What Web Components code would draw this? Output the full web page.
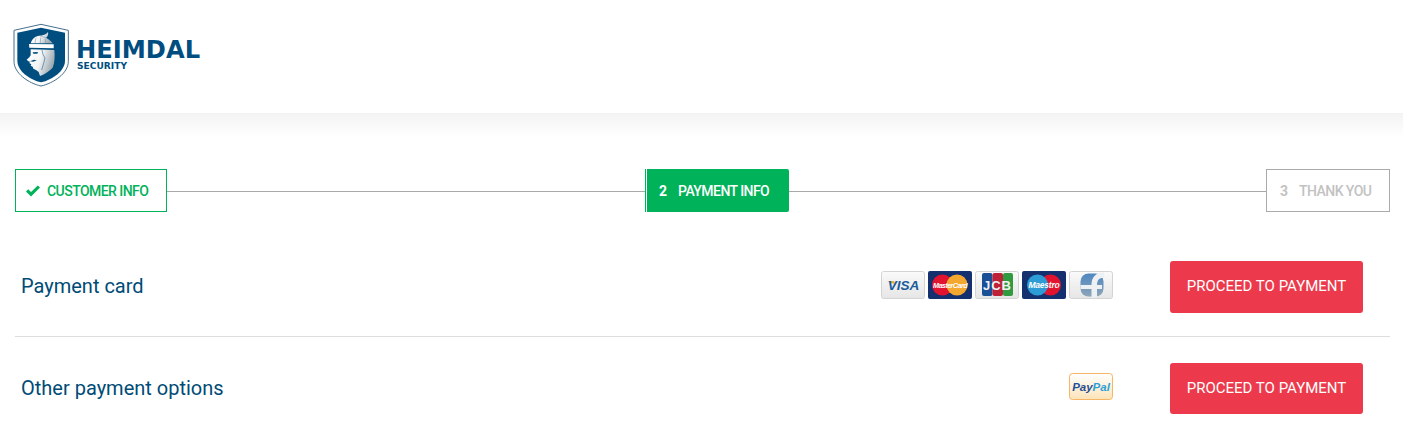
<!DOCTYPE html>
<html lang="en">
<head>
<meta charset="utf-8">
<title>Heimdal Security - Payment info</title>
<style>
  html, body { margin: 0; background: #fff; font-family: Roboto, sans-serif; }
</style>
</head>
<body>
<heimdal-header></heimdal-header>
<checkout-stepper>
  <step-box state="done" style="width:152px">CUSTOMER INFO</step-box>
  <step-line style="flex:478"></step-line>
  <step-box state="active" num="2" style="width:144px">PAYMENT INFO</step-box>
  <step-line style="flex:477"></step-line>
  <step-box num="3" style="width:124px">THANK YOU</step-box>
</checkout-stepper>
<pay-row divider style="--top:23px;--bottom:23px">
  Payment card
  <pay-card slot="cards" type="visa"></pay-card>
  <pay-card slot="cards" type="mastercard"></pay-card>
  <pay-card slot="cards" type="jcb"></pay-card>
  <pay-card slot="cards" type="maestro"></pay-card>
  <pay-card slot="cards" type="fcard"></pay-card>
</pay-row>
<pay-row style="--top:26px;--bottom:16px;--btn:51px">
  Other payment options
  <pay-card slot="cards" type="paypal"></pay-card>
</pay-row>

<script>
(function () {
  class HeimdalHeader extends HTMLElement {
    constructor() {
      super();
      const shadowRoot = this.attachShadow({ mode: "open" });
      shadowRoot.innerHTML = `
        <style>
          :host {
            display: block;
            height: 137px;
            background: linear-gradient(#fff 113px, #f3f3f3 113px, #fff 137px);
          }
          .logo {
            display: flex;
            padding: 20px 0 0 10px;
            color: #004e80;
            font-family: "DejaVu Sans", sans-serif;
            font-weight: bold;
          }
          svg {
            display: block;
            width: 65px;
            height: 70px;
          }
          .name {
            margin: 19px 0 0 1px;
            font-size: 24.2px;
            line-height: 22px;
          }
          .sub {
            margin: 0 0 0 2px;
            font-size: 9.1px;
            line-height: 10px;
          }
        </style>
        <div class="logo">
          <svg viewBox="0 0 195 210" aria-hidden="true">
            <defs>
              <linearGradient id="steel" x1="0" y1="0" x2="1" y2="0.3">
                <stop offset="0" stop-color="#fff"/>
                <stop offset="0.55" stop-color="#f2f4f5"/>
                <stop offset="1" stop-color="#9fabb3"/>
              </linearGradient>
            </defs>
            <path d="M93 13 L175 31 V124 C175 160 130 190 93 198 C56 190 12 160 12 124 V31 Z" fill="#fff" stroke="#47708d" stroke-width="3"/>
            <path d="M93 23 L165 38 V122 C165 153 127 179 93 187 C59 179 22 153 22 122 V38 Z" fill="#004e80"/>
            <!-- wing and helmet dome -->
            <path d="M62 70 C66 56 76 48 88 47 C98 47 108 44 114 36 C116 44 113 50 108 54 C115 56 122 62 128 70 Z" fill="url(#steel)"/>
            <path d="M88 47 C96 50 104 52 108 54 M78 53 L75 69 M92 52 L91 69 M106 57 L107 69" stroke="#6f8a9d" stroke-width="1.5" fill="none"/>
            <!-- band -->
            <path d="M57 72 L131 73 L131 85 L58 83 Z" fill="#fff"/>
            <!-- face, beard and hair -->
            <path d="M62 88 L133 90 C135 110 134 128 128 143 C118 153 105 162 90 168 L86 156 L78 150 L70 146 L68 140 L62 137 L64 133 L58 129 L60 125 L55 124 L50 119 L58 112 L62 106 Z" fill="url(#steel)"/>
            <path d="M68 97 L84 96 L82 101 L70 101 Z M60 124 L72 119 L80 121 L70 125 Z" fill="#004e80"/>
            <path d="M96 90 L99 104 L105 114 L101 130 L95 150" stroke="#004e80" stroke-width="1.5" fill="none"/>
          </svg>
          <div>
            <div class="name">HEIMDAL</div>
            <div class="sub">SECURITY</div>
          </div>
        </div>
      `;
    }
  }

  class CheckoutStepper extends HTMLElement {
    constructor() {
      super();
      const shadowRoot = this.attachShadow({ mode: "open" });
      shadowRoot.innerHTML = `
        <style>
          :host {
            display: flex;
            height: 43px;
            margin: 32px 13px 0 15px;
          }
        </style>
        <slot></slot>
      `;
    }
  }

  class StepLine extends HTMLElement {
    constructor() {
      super();
      const shadowRoot = this.attachShadow({ mode: "open" });
      shadowRoot.innerHTML = `
        <style>
          :host {
            display: block;
            height: 1px;
            margin-top: 22px;
            background: #a9a9a9;
          }
        </style>
      `;
    }
  }

  class StepBox extends HTMLElement {
    constructor() {
      super();
      const state = this.getAttribute("state") || "todo";
      const num = this.getAttribute("num");
      const lead =
        state === "done"
          ? `<svg class="check" viewBox="0 0 16 12" aria-hidden="true"><path d="M1 6.5 L3.2 4.3 L6 7 L12.8 .4 L15 2.6 L6 11.6 Z" fill="currentColor"/></svg>`
          : `<span class="num">${num}</span>`;
      const shadowRoot = this.attachShadow({ mode: "open" });
      shadowRoot.innerHTML = `
        <style>
          :host {
            display: block;
            flex: none;
            box-sizing: border-box;
            height: 43px;
          }
          .box {
            display: flex;
            align-items: center;
            box-sizing: border-box;
            height: 100%;
            font-size: 14px;
            font-weight: 500;
            letter-spacing: -0.55px;
            white-space: nowrap;
          }
          .done {
            border: 1px solid #00b259;
            color: #00b259;
            padding-left: 9px;
          }
          .active {
            border-left: 1px solid #00b259;
            background: linear-gradient(#00b259, #00b259) 1px 0 / 100% 100% no-repeat;
            color: #fff;
            border-radius: 0 2px 2px 0;
            padding-left: 13px;
          }
          .todo {
            border: 1px solid #aaa;
            color: #c2c2c2;
            padding-left: 13px;
          }
          .check {
            width: 16px;
            height: 12px;
            margin-right: 6px;
          }
          .num {
            font-weight: 700;
            letter-spacing: 0;
            margin-right: 11px;
          }
        </style>
        <div class="box ${state}">${lead}<slot></slot></div>
      `;
    }
  }

  class PayRow extends HTMLElement {
    constructor() {
      super();
      const shadowRoot = this.attachShadow({ mode: "open" });
      shadowRoot.innerHTML = `
        <style>
          :host {
            display: flex;
            align-items: center;
            margin: 0 13px 0 15px;
            padding: var(--top) 27px var(--bottom) 6px;
            font-size: 20px;
            color: #004b76;
          }
          :host([divider]) {
            border-bottom: 1px solid #ddd;
            margin-top: 26px;
          }
          .label { flex: 1; margin-bottom: 2px; }
          .cards {
            display: flex;
            gap: 3px;
            margin: 0 57px 4px 0;
          }
          button {
            width: 193px;
            height: var(--btn, 52px);
            padding: 0 0 2px;
            border: none;
            border-radius: 3px;
            background: #ec3a4c;
            color: #fff;
            font: 400 15px Roboto, sans-serif;
          }
        </style>
        <div class="label"><slot></slot></div>
        <div class="cards"><slot name="cards"></slot></div>
        <button>PROCEED TO PAYMENT</button>
      `;
    }
  }

  const cards = {
    visa: `
      <rect x=".5" y=".5" width="43" height="27" rx="2" fill="url(#g)" stroke="#d4d4d4"/>
      <path d="M6 10 H13 L15 14 Z" fill="#e8b33c"/>
      <text x="22.5" y="19" text-anchor="middle" font-family="Liberation Sans, sans-serif" font-weight="700" font-style="italic" font-size="13.5" fill="#1a5c9b">VISA</text>`,
    mastercard: `
      <rect width="44" height="28" rx="2" fill="#14306f"/>
      <circle cx="14.5" cy="14" r="10.5" fill="#e2132f"/>
      <circle cx="29" cy="14" r="10.5" fill="#f4a82f"/>
      <text x="22" y="16.500" text-anchor="middle" font-family="Liberation Sans, sans-serif" font-weight="700" font-style="italic" font-size="7.2" letter-spacing="-.55" fill="#fff">MasterCard</text>`,
    jcb: `
      <rect x=".5" y=".5" width="43" height="27" rx="2" fill="url(#g)" stroke="#d4d4d4"/>
      <rect x="7" y="2" width="10.5" height="23" rx="2" fill="#1b4f96"/>
      <rect x="17.5" y="2" width="10.5" height="23" rx="2" fill="#bf2237"/>
      <rect x="28" y="2" width="10" height="23" rx="2" fill="#2f9a3f"/>
      <text x="22.5" y="19" text-anchor="middle" font-family="Liberation Sans, sans-serif" font-weight="700" font-size="13" letter-spacing="1" fill="#eef2f5">JCB</text>`,
    maestro: `
      <rect width="44" height="28" rx="2" fill="#14306f"/>
      <circle cx="28.5" cy="14" r="10.5" fill="#e2132f"/>
      <circle cx="15.5" cy="14" r="10.5" fill="#2c9bd6"/>
      <text x="22" y="17" text-anchor="middle" font-family="Liberation Sans, sans-serif" font-weight="700" font-style="italic" font-size="8.5" letter-spacing="-.2" fill="#fff">Maestro</text>`,
    fcard: `
      <rect x=".5" y=".5" width="43" height="27" rx="2" fill="url(#g)" stroke="#d4d4d4"/>
      <defs><linearGradient id="f" x1="0" y1="0" x2="0" y2="1"><stop offset="0" stop-color="#4d87c0"/><stop offset="1" stop-color="#8ea5b8"/></linearGradient></defs>
      <rect x="11.500" y="2.500" width="23" height="23" rx="8" fill="url(#f)"/>
      <path d="M22.500 26.500 V18 H11.500 V14 H22.500 C22.500 6 27 1 35 1.500 V7 C30 6.500 28.200 9 28 14 H33 V18 H28 V26.500 Z" fill="#eef1f3"/>`,
    paypal: `
      <defs><linearGradient id="p" x1="0" y1="0" x2="0" y2="1"><stop offset="0" stop-color="#fff"/><stop offset="1" stop-color="#fde4b8"/></linearGradient></defs>
      <rect x=".5" y=".5" width="43" height="26" rx="3" fill="url(#p)" stroke="#f6b567"/>
      <text x="22" y="17.500" text-anchor="middle" font-family="Liberation Sans, sans-serif" font-weight="700" font-style="italic" font-size="11.500" fill="#1f4f96">Pay<tspan fill="#2a9fd8">Pal</tspan></text>`,
  };

  class PayCard extends HTMLElement {
    constructor() {
      super();
      const type = this.getAttribute("type");
      const height = type === "paypal" ? 27 : 28;
      const shadowRoot = this.attachShadow({ mode: "open" });
      shadowRoot.innerHTML = `
        <style>
          :host {
            display: block;
            width: 44px;
            height: ${height}px;
          }
          svg {
            display: block;
            width: 44px;
            height: ${height}px;
          }
        </style>
        <svg viewBox="0 0 44 ${height}" role="img" aria-label="${type}">
          <defs><linearGradient id="g" x1="0" y1="0" x2="0" y2="1"><stop offset="0" stop-color="#fafafa"/><stop offset="1" stop-color="#e6e6e6"/></linearGradient></defs>
          ${cards[type]}
        </svg>
      `;
    }
  }

  customElements.define("heimdal-header", HeimdalHeader);
  customElements.define("checkout-stepper", CheckoutStepper);
  customElements.define("step-line", StepLine);
  customElements.define("step-box", StepBox);
  customElements.define("pay-row", PayRow);
  customElements.define("pay-card", PayCard);
})();
</script>
</body>
</html>
